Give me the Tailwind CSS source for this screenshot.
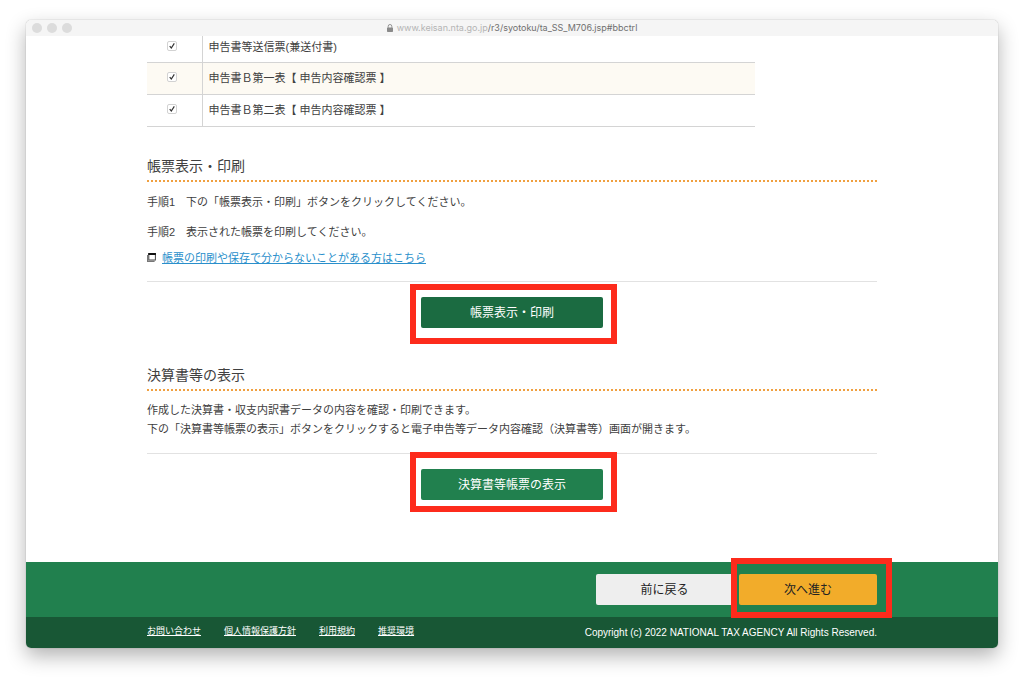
<!DOCTYPE html>
<html lang="ja">
<head>
<meta charset="utf-8">
<meta name="viewport" content="width=device-width, initial-scale=1">
<title>帳票表示・印刷</title>
<script src="https://cdn.jsdelivr.net/npm/@tailwindcss/browser@4"></script>
</head>
<body class="bg-white px-[26px] pt-5 pb-8 font-['Liberation_Sans','Noto_Sans_CJK_JP',sans-serif] text-[11px] text-[#404040]">
<div class="rounded-[5px] bg-white shadow-[0_0_1px_rgba(0,0,0,0.45),0_8px_20px_rgba(0,0,0,0.3)]">
  <!-- Title bar -->
  <header class="relative flex h-4 items-center justify-center rounded-t-[5px] bg-[#f5f5f5]">
    <div class="absolute left-[6px] flex gap-[5px]">
      <span class="size-[10px] rounded-full bg-[#dcdcdc]"></span>
      <span class="size-[10px] rounded-full bg-[#dcdcdc]"></span>
      <span class="size-[10px] rounded-full bg-[#dcdcdc]"></span>
    </div>
    <div class="flex items-center gap-1 font-['Inter',sans-serif] text-[9px] leading-4 text-[#707070]">
      <svg class="h-2 w-[6px]" viewBox="0 0 6 8" aria-hidden="true"><rect y="3.4" width="6" height="4.6" rx=".7" fill="#8a8a8a"/><path d="M1.2 3.8V2.3a1.8 1.8 0 0 1 3.6 0v1.5" fill="none" stroke="#8a8a8a" stroke-width=".9"/></svg>
      <span><span class="text-[#b4b4b4]">www.keisan.nta.go.jp</span>/r3/syotoku/ta_SS_M706.jsp#bbctrl</span>
    </div>
  </header>

  <main class="mx-auto max-w-[730px] pb-[62px]">
    <table class="w-5/6 border-collapse">
      <tbody>
        <tr class="h-[26px] border-b border-[#d4d4d4]">
          <td class="w-[55px] border-r border-[#d4d4d4] pb-[6px]">
            <span class="ml-5 grid size-[10px]">
              <input id="c1" type="checkbox" checked class="[grid-area:1/1] size-[10px] appearance-none rounded-[2px] border border-[#d2d2d2] bg-white">
              <svg class="pointer-events-none [grid-area:1/1] size-[10px]" viewBox="0 0 10 10" fill="none" stroke="#333" stroke-width="1.2"><path d="M2.7 5.2 4.3 7 7.3 2.4"/></svg>
            </span>
          </td>
          <td class="pb-1 pl-[6px] leading-4"><label for="c1">申告書等送信票(兼送付書)</label></td>
        </tr>
        <tr class="h-8 border-b border-[#d4d4d4] bg-[#fdfaf3]">
          <td class="border-r border-[#d4d4d4] pb-[2px]">
            <span class="ml-5 grid size-[10px]">
              <input id="c2" type="checkbox" checked class="[grid-area:1/1] size-[10px] appearance-none rounded-[2px] border border-[#d2d2d2] bg-white">
              <svg class="pointer-events-none [grid-area:1/1] size-[10px]" viewBox="0 0 10 10" fill="none" stroke="#333" stroke-width="1.2"><path d="M2.7 5.2 4.3 7 7.3 2.4"/></svg>
            </span>
          </td>
          <td class="pl-[6px] leading-4"><label for="c2">申告書Ｂ第一表【 申告内容確認票 】</label></td>
        </tr>
        <tr class="h-8 border-b border-[#d4d4d4]">
          <td class="border-r border-[#d4d4d4] pb-[2px]">
            <span class="ml-5 grid size-[10px]">
              <input id="c3" type="checkbox" checked class="[grid-area:1/1] size-[10px] appearance-none rounded-[2px] border border-[#d2d2d2] bg-white">
              <svg class="pointer-events-none [grid-area:1/1] size-[10px]" viewBox="0 0 10 10" fill="none" stroke="#333" stroke-width="1.2"><path d="M2.7 5.2 4.3 7 7.3 2.4"/></svg>
            </span>
          </td>
          <td class="pl-[6px] leading-4"><label for="c3">申告書Ｂ第二表【 申告内容確認票 】</label></td>
        </tr>
      </tbody>
    </table>

    <section class="pt-[29px]">
      <h2 class="border-b-2 border-dotted border-[#f0a040] pb-1 text-[14px] leading-5">帳票表示・印刷</h2>
      <p class="mt-[10px] leading-5">手順1　下の「帳票表示・印刷」ボタンをクリックしてください。</p>
      <p class="mt-[10px] leading-5">手順2　表示された帳票を印刷してください。</p>
      <p class="mt-[6px] flex items-center gap-[6px] border-b border-[#e2e2e2] pb-[13px] leading-5">
        <svg class="h-[9px] w-[9px]" viewBox="0 0 9 9" aria-hidden="true"><path d="M.6 2v6.4h7" fill="none" stroke="#777" stroke-width="1.2"/><rect x="1.8" y=".6" width="6.6" height="6.4" fill="#fff" stroke="#444"/><path d="M1.3 1h7.6" stroke="#111" stroke-width="2"/></svg>
        <a href="#" class="text-[#2a8fcb] underline">帳票の印刷や保存で分からないことがある方はこちら</a>
      </p>
      <div class="relative mx-auto mt-[15px] w-1/4">
        <button type="button" class="h-[31px] w-full rounded-[2px] bg-[#1b6b41] pt-[2px] text-[12px] text-white">帳票表示・印刷</button>
        <span class="pointer-events-none absolute -top-[13px] -right-[14px] -bottom-4 -left-[11px] border-[6px] border-[#fd2b1c]"></span>
      </div>
    </section>

    <section class="pt-[37px]">
      <h2 class="border-b-2 border-dotted border-[#f0a040] pb-1 text-[14px] leading-5">決算書等の表示</h2>
      <p class="mt-[10px] border-b border-[#e2e2e2] pb-[14px] leading-[19px]">作成した決算書・収支内訳書データの内容を確認・印刷できます。<br>下の「決算書等帳票の表示」ボタンをクリックすると電子申告等データ内容確認（決算書等）画面が開きます。</p>
      <div class="relative mx-auto mt-[15px] w-1/4">
        <button type="button" class="h-[31px] w-full rounded-[2px] bg-[#21804e] pt-[2px] text-[12px] text-white">決算書等帳票の表示</button>
        <span class="pointer-events-none absolute -top-[17px] -right-[14px] -bottom-3 -left-[11px] border-[6px] border-[#fd2b1c]"></span>
      </div>
    </section>
  </main>

  <div class="bg-[#21804e] py-3">
    <div class="mx-auto flex max-w-[730px] justify-end gap-[6px] text-[12px] text-[#222]">
      <button type="button" class="h-[31px] w-[137px] rounded-[2px] bg-[#eee] pt-[2px]">前に戻る</button>
      <div class="relative">
        <button type="button" class="h-[31px] w-[138px] rounded-[2px] bg-[#f2ac2a] pt-[2px]">次へ進む</button>
        <span class="pointer-events-none absolute -top-4 -right-[15px] -bottom-[13px] -left-2 border-[6px] border-[#fd2b1c]"></span>
      </div>
    </div>
  </div>
  <footer class="rounded-b-[5px] bg-[#185735] text-[9px] text-white">
    <div class="mx-auto flex h-[31px] max-w-[730px] items-center justify-between">
      <nav class="flex gap-[23px]">
        <a href="#" class="underline">お問い合わせ</a>
        <a href="#" class="underline">個人情報保護方針</a>
        <a href="#" class="underline">利用規約</a>
        <a href="#" class="underline">推奨環境</a>
      </nav>
      <small class="text-[10px]">Copyright (c) 2022 NATIONAL TAX AGENCY All Rights Reserved.</small>
    </div>
  </footer>
</div>
</body>
</html>
